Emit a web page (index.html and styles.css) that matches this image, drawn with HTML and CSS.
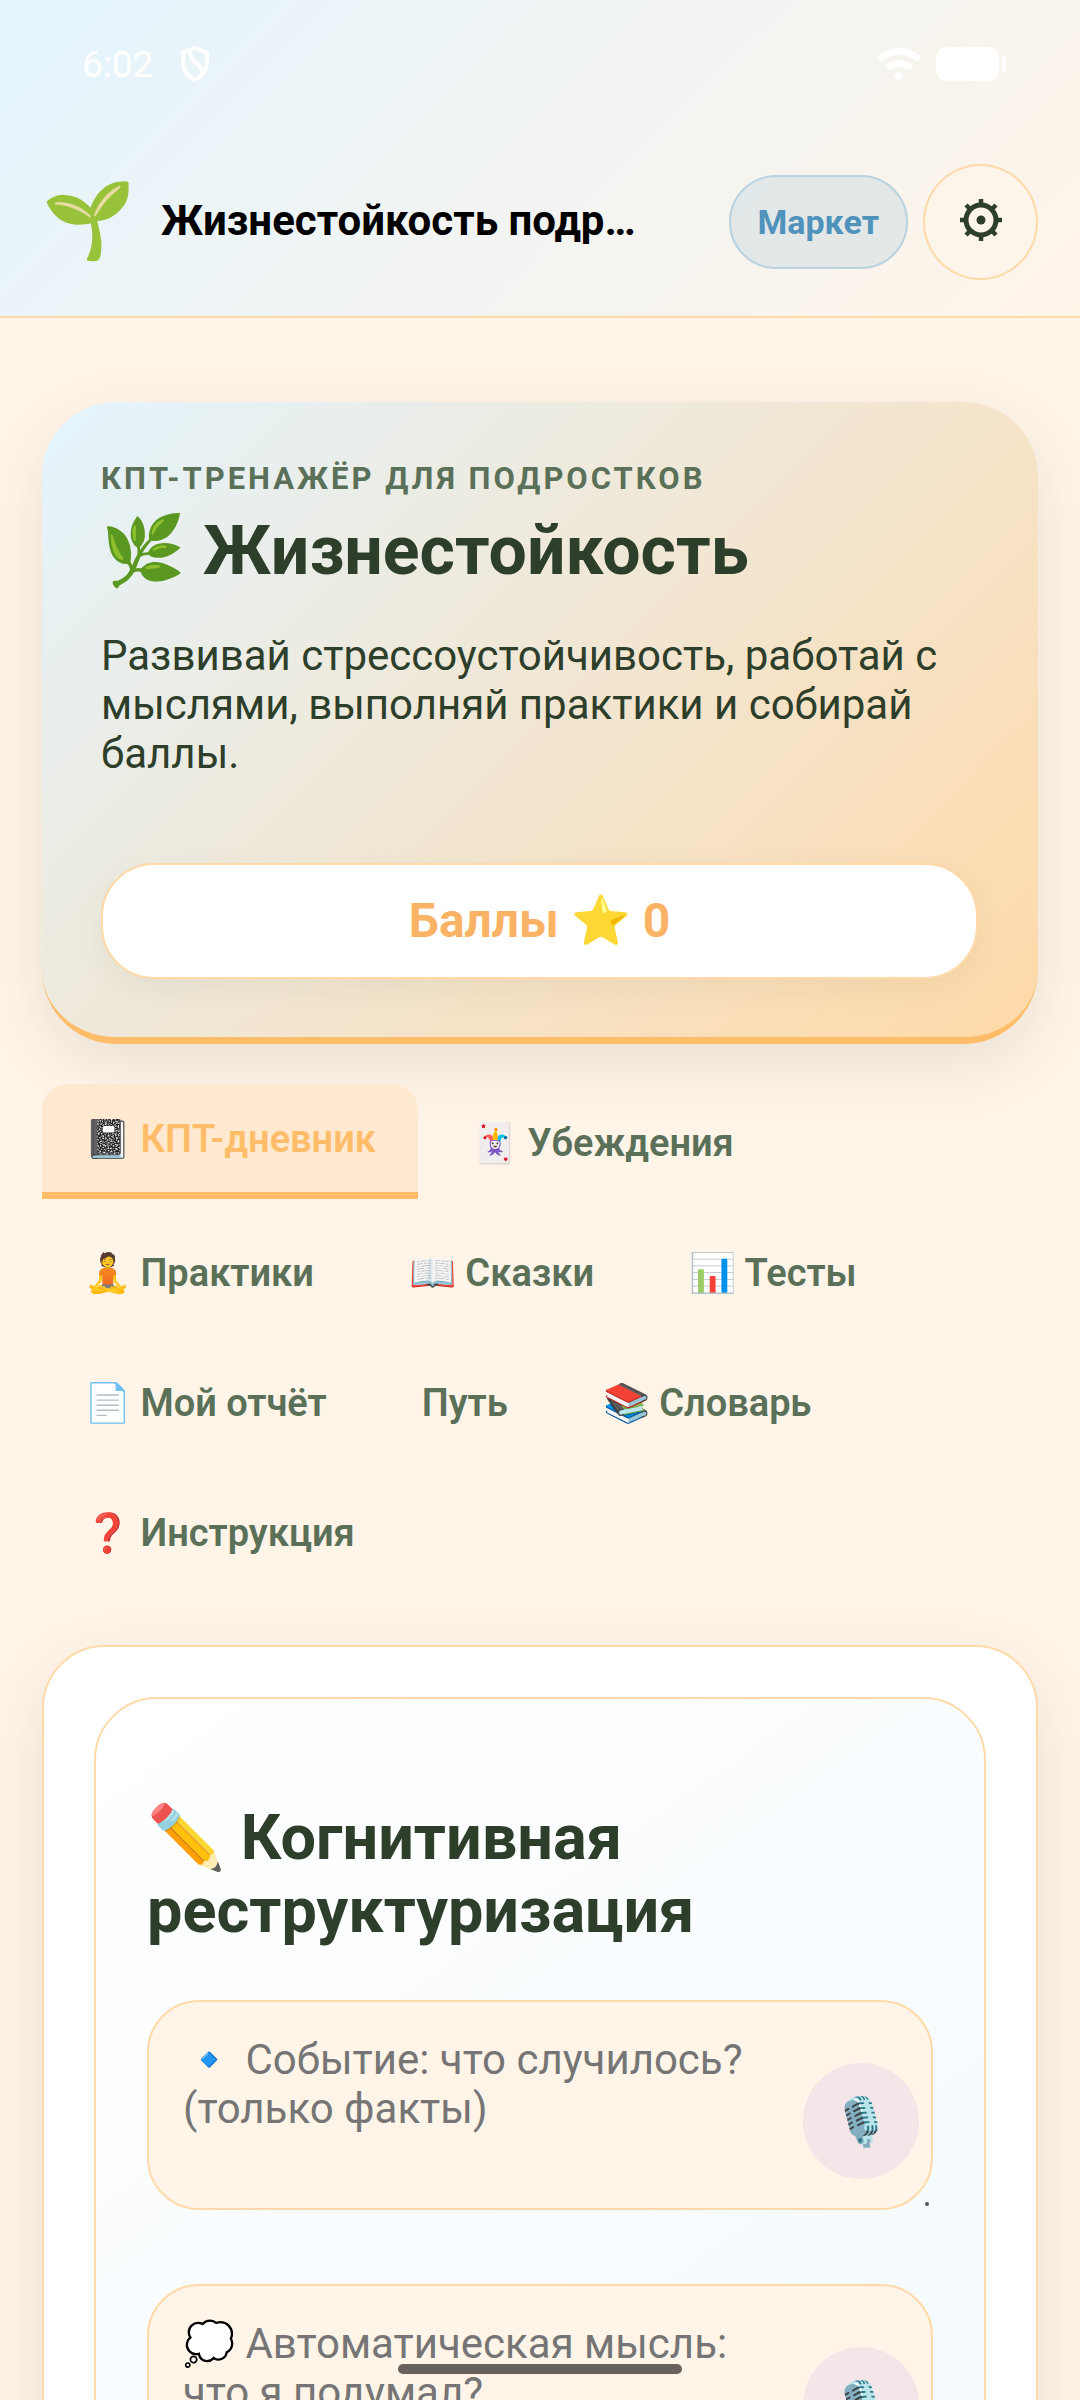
FILE: index.html
```html
<!DOCTYPE html>
<html lang="ru">
<head>
    <meta charset="UTF-8">
    <meta name="viewport" content="width=device-width, initial-scale=1.0">
    <title>Жизнестойкость подростков</title>
    <link rel="stylesheet" href="styles.css">
</head>
<body>
    <div class="app">
        <header class="header">
            <div class="status-bar">
                <span class="time">6:02</span>
                <svg class="shield" viewBox="0 0 30 36" fill="none" stroke="#fff" stroke-width="4" stroke-linejoin="round" stroke-linecap="round">
                    <path d="M15 2 L27 6.500 V16 C27 24 22 30 15 34 C8 30 3 24 3 16 V6.500 Z"/>
                    <path d="M10 5 C9 17 24 17 22 28"/>
                </svg>
                <svg class="wifi" viewBox="0 0 44 34" fill="none" stroke="#fff" stroke-width="7" stroke-linecap="round">
                    <path d="M4 10.500 C15 2.500 29 2.500 40 10.500"/>
                    <path d="M12.500 19 C19 15.500 25 15.500 31.500 19"/>
                    <circle cx="22" cy="29" r="4" fill="#fff" stroke="none"/>
                </svg>
                <svg class="battery" viewBox="0 0 70 36" fill="#fff">
                    <rect x="0" y="1" width="63" height="34" rx="11"/>
                    <path d="M66 10 C69 10 70 12 70 14 V22 C70 24 69 26 66 26 Z"/>
                </svg>
            </div>
            <div class="topbar">
                <span class="logo">🌱</span>
                <span class="app-title">Жизнестойкость подростков</span>
                <button type="button" class="market-btn">Маркет</button>
                <button type="button" class="settings-btn" aria-label="Настройки">
                    <svg viewBox="0 0 42 42" fill="none" stroke="#2d3e2a">
                        <circle cx="21" cy="21" r="15" stroke-width="5"/>
                        <circle cx="21" cy="21" r="4.500" fill="#2d3e2a" stroke="none"/>
                        <path stroke-width="4.500" d="M21 0V6M21 36V42M0 21H6M36 21H42M6 6L10 10M32 32L36 36M36 6L32 10M10 32L6 36"/>
                    </svg>
                </button>
            </div>
        </header>

        <main class="content">
            <section class="hero">
                <div class="hero-label">КПТ-ТРЕНАЖЁР ДЛЯ ПОДРОСТКОВ</div>
                <h1>🌿 Жизнестойкость</h1>
                <p>Развивай стрессоустойчивость, работай с мыслями, выполняй практики и собирай баллы.</p>
                <div class="score">Баллы ⭐ 0</div>
            </section>

            <nav class="tabs">
                <button type="button" class="tab active">📓 КПТ-дневник</button>
                <button type="button" class="tab">🃏 Убеждения</button>
                <button type="button" class="tab">🧘 Практики</button>
                <button type="button" class="tab">📖 Сказки</button>
                <button type="button" class="tab">📊 Тесты</button>
                <button type="button" class="tab">📄 Мой отчёт</button>
                <button type="button" class="tab">Путь</button>
                <button type="button" class="tab">📚 Словарь</button>
                <button type="button" class="tab">❓ Инструкция</button>
            </nav>

            <section class="panel">
                <form class="card">
                    <h2>✏️ Когнитивная реструктуризация</h2>
                    <div class="field">
                        <textarea id="event" aria-label="Событие" placeholder="🔹 Событие: что случилось? (только факты)"></textarea>
                        <button type="button" class="mic-btn" aria-label="Надиктовать событие">🎙️</button>
                    </div>
                    <div class="field">
                        <textarea id="thought" aria-label="Автоматическая мысль" placeholder="💭 Автоматическая мысль: что я подумал?"></textarea>
                        <button type="button" class="mic-btn" aria-label="Надиктовать мысль">🎙️</button>
                    </div>
                </form>
            </section>
        </main>
        <div class="home-indicator"></div>
    </div>
</body>
</html>
```
FILE: styles.css
```css
/* General Styles */
* {
    box-sizing: border-box;
}
body {
    margin: 0;
    font-family: Roboto, sans-serif;
    font-size: 42px;
    line-height: 49px;
    color: #2d3e2a;
    background: #fff4e8;
}
button, textarea {
    font-family: inherit;
    margin: 0;
}
.app {
    position: relative;
    height: 100vh;
    overflow: hidden;
}

/* Header */
.header {
    background: linear-gradient(135deg, #e4f4fd, #fff4e8);
    border-bottom: 2px solid #ffd9a8;
    padding: 0 42px 36px;
}
.status-bar {
    display: flex;
    align-items: center;
    height: 128px;
    padding: 0 32px 0 40px;
    color: #fff;
    font-size: 37px;
}
.shield {
    width: 30px;
    height: 36px;
    margin-left: 27px;
}
.wifi {
    width: 44px;
    height: 34px;
    margin-left: auto;
}
.battery {
    width: 70px;
    height: 36px;
    margin-left: 15px;
}
.topbar {
    display: flex;
    align-items: center;
    padding-top: 36px;
}
.logo {
    font-size: 75px;
    line-height: 88px;
    margin-right: 26px;
    padding-bottom: 4px;
}
.app-title {
    flex: 0 1 480px;
    min-width: 0;
    padding-bottom: 4px;
    overflow: hidden;
    white-space: nowrap;
    text-overflow: ellipsis;
    font-weight: bold;
    color: #000;
}
.market-btn {
    margin-left: auto;
    height: 94px;
    padding: 0 27px;
    border: 2px solid #b8d2df;
    border-radius: 47px;
    background: rgba(74, 144, 188, 0.12);
    color: #4f92bc;
    font-size: 34px;
    font-weight: bold;
}
.settings-btn {
    display: flex;
    align-items: center;
    justify-content: center;
    width: 115px;
    height: 116px;
    margin-left: 15px;
    padding: 0 0 4px;
    border: 2px solid #ffd9a8;
    border-radius: 50%;
    background: #fdf4ea;
}
.settings-btn svg {
    width: 42px;
    height: 42px;
}

/* Hero */
.content {
    padding: 84px 42px 0;
}
.hero {
    padding: 58px 60px 58px 59px;
    border-bottom: 7px solid #ffbd69;
    border-radius: 74px;
    background: linear-gradient(135deg, #e4f4fd, #ffd9a8);
    box-shadow: 0 21px 63px rgba(45, 62, 42, 0.1);
}
.hero-label {
    font-size: 31px;
    line-height: 37px;
    font-weight: bold;
    letter-spacing: 3px;
    color: #5a7058;
}
h1 {
    margin: 14px 0 39px;
    font-size: 68px;
    line-height: 81px;
}
.hero p {
    margin: 0 0 85px;
}
.score {
    padding: 29px;
    border: 2px solid #ffd9a8;
    border-radius: 53px;
    background: #fff;
    box-shadow: 0 10px 32px rgba(45, 62, 42, 0.06);
    color: #fab365;
    font-size: 48px;
    line-height: 54px;
    font-weight: bold;
    text-align: center;
}

/* Tabs */
.tabs {
    display: flex;
    flex-wrap: wrap;
    gap: 15px 11px;
    margin: 40px 0 56px;
}
.tab {
    height: 115px;
    padding: 2px 42px 0;
    border: none;
    border-radius: 26px 26px 0 0;
    background: none;
    color: #5a7058;
    font-size: 38px;
    font-weight: 600;
}
.tab.active {
    border-bottom: 7px solid #ffbd69;
    background: #ffead1;
    color: #ffbd69;
}

/* Diary */
.panel {
    padding: 50px;
    border: 2px solid #ffd9a8;
    border-radius: 63px;
    background: #fff;
    box-shadow: 0 21px 63px rgba(45, 62, 42, 0.1);
}
.card {
    padding: 51px;
    border: 2px solid #ffd9a8;
    border-radius: 63px;
    background: linear-gradient(145deg, #fff, #f2f9fe);
}
h2 {
    margin: 51px 0 53px;
    font-size: 63px;
    line-height: 73px;
}
.field {
    position: relative;
    margin-bottom: 74px;
}
.field textarea {
    display: block;
    width: 100%;
    height: 210px;
    padding: 33px 140px 33px 34px;
    border: 2px solid #ffd9a8;
    border-radius: 52px;
    background: #fff4e8;
    font-size: 42px;
    line-height: 49px;
    overflow: hidden;
    resize: none;
}
.field textarea::placeholder {
    color: #757575;
}
.field::after {
    content: "";
    position: absolute;
    right: 4px;
    bottom: 4px;
    width: 4px;
    height: 4px;
    border-radius: 50%;
    background: #555;
}
.mic-btn {
    position: absolute;
    top: 63px;
    right: 14px;
    width: 116px;
    height: 116px;
    padding: 0;
    border: none;
    border-radius: 50%;
    background: #f3e5e8;
    font-size: 47px;
}

.home-indicator {
    position: absolute;
    left: 50%;
    bottom: 26px;
    width: 284px;
    height: 10px;
    margin-left: -142px;
    border-radius: 5px;
    background: #67635c;
}
```
